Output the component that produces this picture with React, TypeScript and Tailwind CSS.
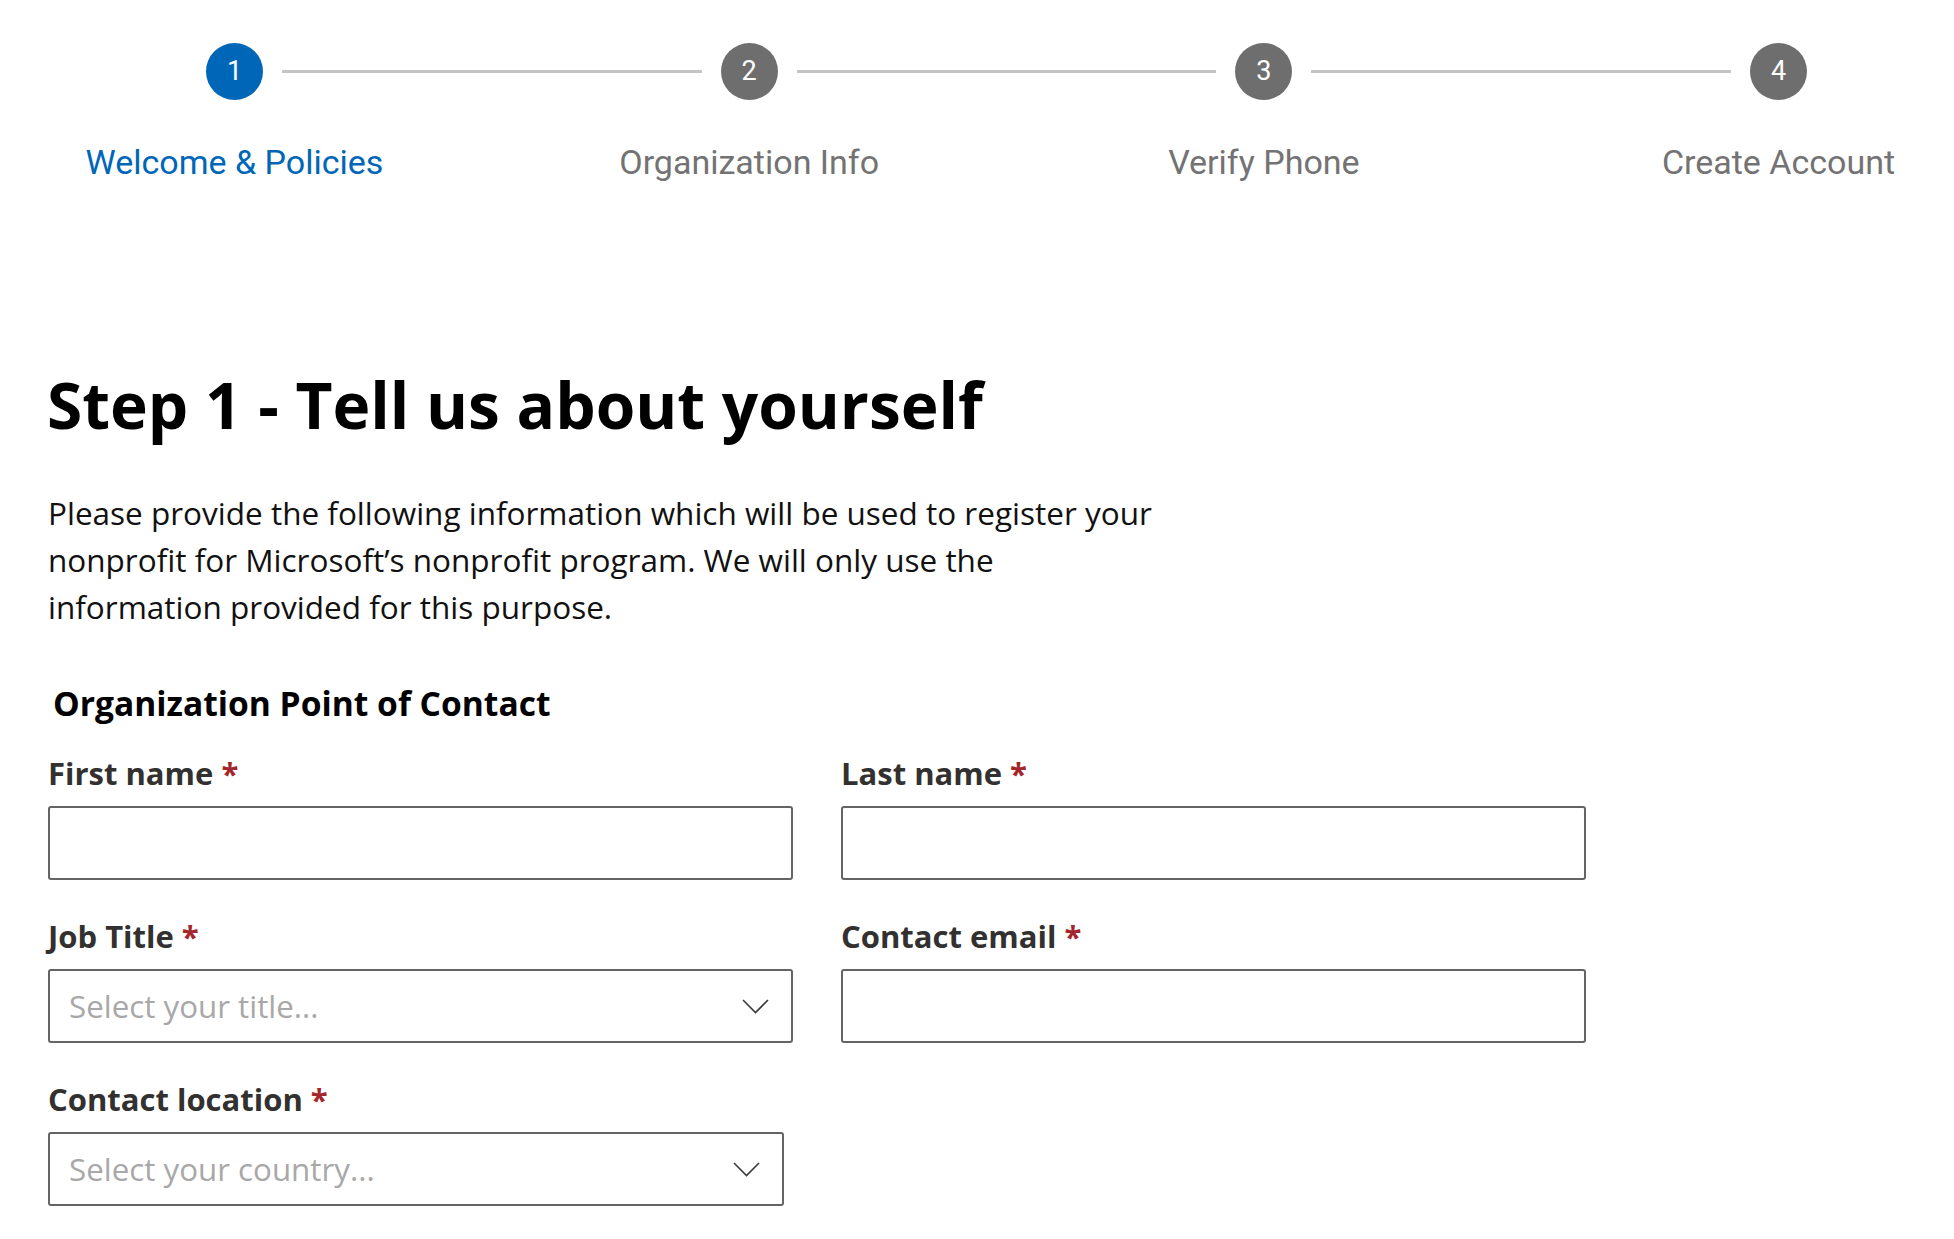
import * as React from "react"

// ==================== STEPPER ====================

interface Step {
  num: number
  label: string
  active?: boolean
}

const steps: Step[] = [
  { num: 1, label: "Welcome & Policies", active: true },
  { num: 2, label: "Organization Info" },
  { num: 3, label: "Verify Phone" },
  { num: 4, label: "Create Account" },
]

const StepItem: React.FC<{ step: Step }> = ({ step }) => (
  <div className="flex w-[57px] shrink-0 flex-col items-center">
    <div
      className={
        step.active
          ? "flex h-[57px] w-[57px] items-center justify-center rounded-full bg-[#0067b8] text-[27px] text-white"
          : "flex h-[57px] w-[57px] items-center justify-center rounded-full bg-[#6e6e6e] text-[27px] text-white"
      }
    >
      {step.num}
    </div>
    <div
      className={
        step.active
          ? "mt-[42px] whitespace-nowrap text-[34px] leading-[40px] text-[#0067b8]"
          : "mt-[42px] whitespace-nowrap text-[34px] leading-[40px] text-[#737373]"
      }
    >
      {step.label}
    </div>
  </div>
)

const Stepper: React.FC = () => (
  <div className="ml-[206px] flex w-[1601px] items-start pt-[43px] font-['Roboto',sans-serif]">
    {steps.map((step, i) => (
      <React.Fragment key={step.num}>
        <StepItem step={step} />
        {i < steps.length - 1 && (
          <div className="mx-[19px] mt-[27px] h-[3px] flex-1 bg-[#c4c4c4]" />
        )}
      </React.Fragment>
    ))}
  </div>
)

// ==================== FORM PARTS ====================

const Label: React.FC<{ text: string }> = ({ text }) => (
  <label className="block text-[31px] font-bold leading-[38px] text-[#323130]">
    {text} <span className="text-[#a4262c]">*</span>
  </label>
)

const TextBox: React.FC = () => (
  <input
    type="text"
    className="block h-[74px] w-full rounded-[3px] border-2 border-[#646464] bg-white px-[18px] text-[31px] text-[#323130] outline-none"
  />
)

const Chevron: React.FC = () => (
  <svg width="27" height="15" viewBox="0 0 27 15" fill="none">
    <path d="M1 1 L13.5 13.5 L26 1" stroke="#3b3b3b" strokeWidth="1.6" />
  </svg>
)

const SelectBox: React.FC<{ placeholder: string; className?: string }> = ({
  placeholder,
  className = "w-full",
}) => (
  <div
    className={`flex h-[74px] items-center justify-between rounded-[3px] border-2 border-[#646464] bg-white pl-[19px] pr-[22px] ${className}`}
  >
    <span className="text-[31.3px] text-[#a8a8a8]">{placeholder}</span>
    <Chevron />
  </div>
)

const Field: React.FC<React.PropsWithChildren<{ label: string }>> = ({ label, children }) => (
  <div className="flex flex-col gap-[14px]">
    <Label text={label} />
    {children}
  </div>
)

// ==================== APP ====================

const App: React.FC = () => {
  return (
    <div className="min-h-screen bg-white">
      <Stepper />

      <main className="pl-[48px] font-['Open_Sans',sans-serif]">
        <h1 className="-ml-[1px] mt-[191px] text-[64px] font-bold leading-[64px] text-black">
          Step 1 - Tell us about yourself
        </h1>

        <p className="mt-[52px] w-[1115px] text-[31.5px] leading-[47px] text-[#111]">
          Please provide the following information which will be used to register your nonprofit
          for Microsoft’s nonprofit program. We will only use the information provided for this
          purpose.
        </p>

        <h2 className="mt-[53px] pl-[5px] text-[33.6px] font-bold leading-[40px] text-black">
          Organization Point of Contact
        </h2>

        <div className="mt-[31px] grid grid-cols-[745px_745px] gap-x-[48px] gap-y-[37px]">
          <Field label="First name">
            <TextBox />
          </Field>
          <Field label="Last name">
            <TextBox />
          </Field>
          <Field label="Job Title">
            <SelectBox placeholder="Select your title..." />
          </Field>
          <Field label="Contact email">
            <TextBox />
          </Field>
          <Field label="Contact location">
            <SelectBox placeholder="Select your country..." className="w-[736px]" />
          </Field>
        </div>
      </main>
    </div>
  )
}

export default App
